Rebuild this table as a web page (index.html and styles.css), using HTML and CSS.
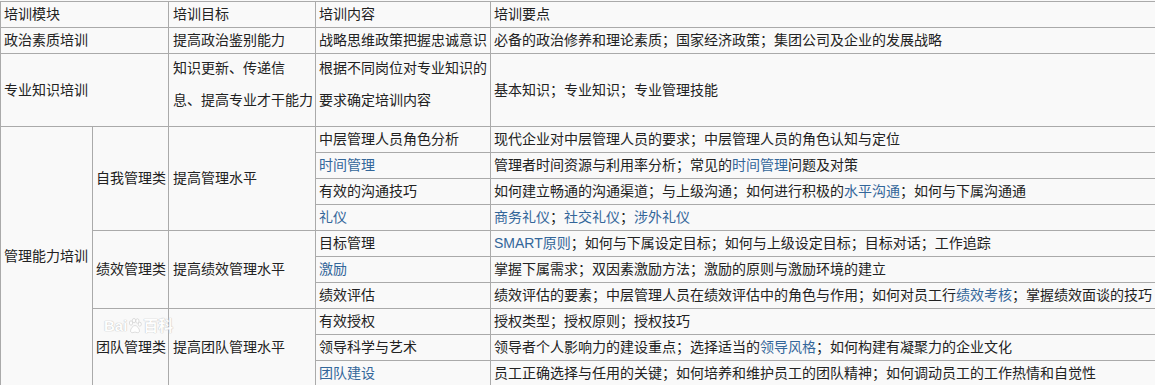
FILE: index.html
```html
<!DOCTYPE html>
<html lang="zh-CN">
<head>
<meta charset="utf-8">
<title>培训模块</title>
<link rel="stylesheet" href="styles.css">
</head>
<body>
<div class="wrap">
<table class="plan">
  <colgroup>
    <col class="c-a">
    <col class="c-b">
    <col class="c-c">
    <col class="c-d">
    <col class="c-e">
  </colgroup>
  <tr>
    <td colspan="2">培训模块</td>
    <td class="goal">培训目标</td>
    <td>培训内容</td>
    <td>培训要点</td>
  </tr>
  <tr>
    <td colspan="2">政治素质培训</td>
    <td class="goal">提高政治鉴别能力</td>
    <td>战略思维政策把握忠诚意识</td>
    <td>必备的政治修养和理论素质；国家经济政策；集团公司及企业的发展战略</td>
  </tr>
  <tr>
    <td colspan="2">专业知识培训</td>
    <td class="goal top"><div class="two">知识更新、传递信<br>息、提高专业才干能力</div></td>
    <td class="top"><div class="two">根据不同岗位对专业知识的<br>要求确定培训内容</div></td>
    <td>基本知识；专业知识；专业管理技能</td>
  </tr>
  <tr>
    <td rowspan="10">管理能力培训</td>
    <td rowspan="4">自我管理类</td>
    <td class="goal" rowspan="4">提高管理水平</td>
    <td>中层管理人员角色分析</td>
    <td>现代企业对中层管理人员的要求；中层管理人员的角色认知与定位</td>
  </tr>
  <tr>
    <td><a href="#">时间管理</a></td>
    <td>管理者时间资源与利用率分析；常见的<a href="#">时间管理</a>问题及对策</td>
  </tr>
  <tr>
    <td>有效的沟通技巧</td>
    <td>如何建立畅通的沟通渠道；与上级沟通；如何进行积极的<a href="#">水平沟通</a>；如何与下属沟通通</td>
  </tr>
  <tr>
    <td><a href="#">礼仪</a></td>
    <td><a href="#">商务礼仪</a>；<a href="#">社交礼仪</a>；<a href="#">涉外礼仪</a></td>
  </tr>
  <tr>
    <td rowspan="3">绩效管理类</td>
    <td class="goal" rowspan="3">提高绩效管理水平</td>
    <td>目标管理</td>
    <td><a href="#">SMART原则</a>；如何与下属设定目标；如何与上级设定目标；目标对话；工作追踪</td>
  </tr>
  <tr>
    <td><a href="#">激励</a></td>
    <td>掌握下属需求；双因素激励方法；激励的原则与激励环境的建立</td>
  </tr>
  <tr>
    <td>绩效评估</td>
    <td>绩效评估的要素；中层管理人员在绩效评估中的角色与作用；如何对员工行<a href="#">绩效考核</a>；掌握绩效面谈的技巧</td>
  </tr>
  <tr>
    <td rowspan="3">团队管理类</td>
    <td class="goal" rowspan="3">提高团队管理水平</td>
    <td>有效授权</td>
    <td>授权类型；授权原则；授权技巧</td>
  </tr>
  <tr>
    <td>领导科学与艺术</td>
    <td>领导者个人影响力的建设重点；选择适当的<a href="#">领导风格</a>；如何构建有凝聚力的企业文化</td>
  </tr>
  <tr>
    <td><a href="#">团队建设</a></td>
    <td>员工正确选择与任用的关键；如何培养和维护员工的团队精神；如何调动员工的工作热情和自觉性</td>
  </tr>
</table>
<div class="watermark" aria-hidden="true">
  <span class="wm-en">Bai</span><svg class="wm-paw" width="14" height="16" viewBox="0 0 14 16"><ellipse cx="3" cy="5" rx="1.6" ry="2.2"/><ellipse cx="6" cy="2.6" rx="1.6" ry="2.2"/><ellipse cx="9.4" cy="3" rx="1.6" ry="2.2"/><ellipse cx="11.8" cy="6.2" rx="1.5" ry="2"/><path d="M7 7.5c-2.2 0-4.5 3.4-4.5 5.4 0 1.6 1.4 2 2.5 1.7 1-.3 1.5-.5 2-.5s1 .2 2 .5c1.1.3 2.5-.1 2.5-1.7 0-2-2.300-5.4-4.5-5.4z"/></svg><span class="wm-cn">百科</span>
</div>
</div>
</body>
</html>
```

FILE: styles.css
```css
html, body {
  margin: 0;
  padding: 0;
  background: #f9f9f9;
}

body {
  padding-top: 1px;
  overflow: hidden;
  height: 384px;
  font-family: "Liberation Sans", "Noto Sans CJK SC", sans-serif;
  font-size: 14px;
  color: #222;
}

.wrap {
  position: relative;
  width: 1155px;
  height: 384px;
  overflow: hidden;
}

.plan {
  border-collapse: collapse;
  table-layout: fixed;
  width: 1160px;
}

.c-a { width: 92px; }
.c-b { width: 76px; }
.c-c { width: 147px; }
.c-d { width: 175px; }
.c-e { width: 670px; }

.plan td {
  border: 1px solid #aaa;
  padding: 0 3px;
  line-height: 25px;
  white-space: nowrap;
  vertical-align: middle;
  background: #f9f9f9;
}

.plan td.goal {
  padding-left: 4px;
}

.plan td.top {
  vertical-align: top;
}

.two {
  line-height: 32px;
  margin-top: -2px;
  padding-bottom: 10px;
}

.plan a {
  color: #336699;
  text-decoration: none;
}

.watermark {
  position: absolute;
  left: 104px;
  top: 317px;
  display: flex;
  align-items: flex-end;
  gap: 1px;
  color: #fff;
  font-family: "Liberation Sans", "Noto Sans CJK SC", sans-serif;
  font-weight: bold;
  font-size: 15px;
  line-height: 16px;
  opacity: 0.9;
  text-shadow: 0 0 1px #bbb, 0 0 1px #bbb;
  pointer-events: none;
}

.wm-paw {
  fill: #fff;
  stroke: #c4c4c4;
  stroke-width: 0.6;
}

.wm-cn {
  font-size: 15px;
}
```
